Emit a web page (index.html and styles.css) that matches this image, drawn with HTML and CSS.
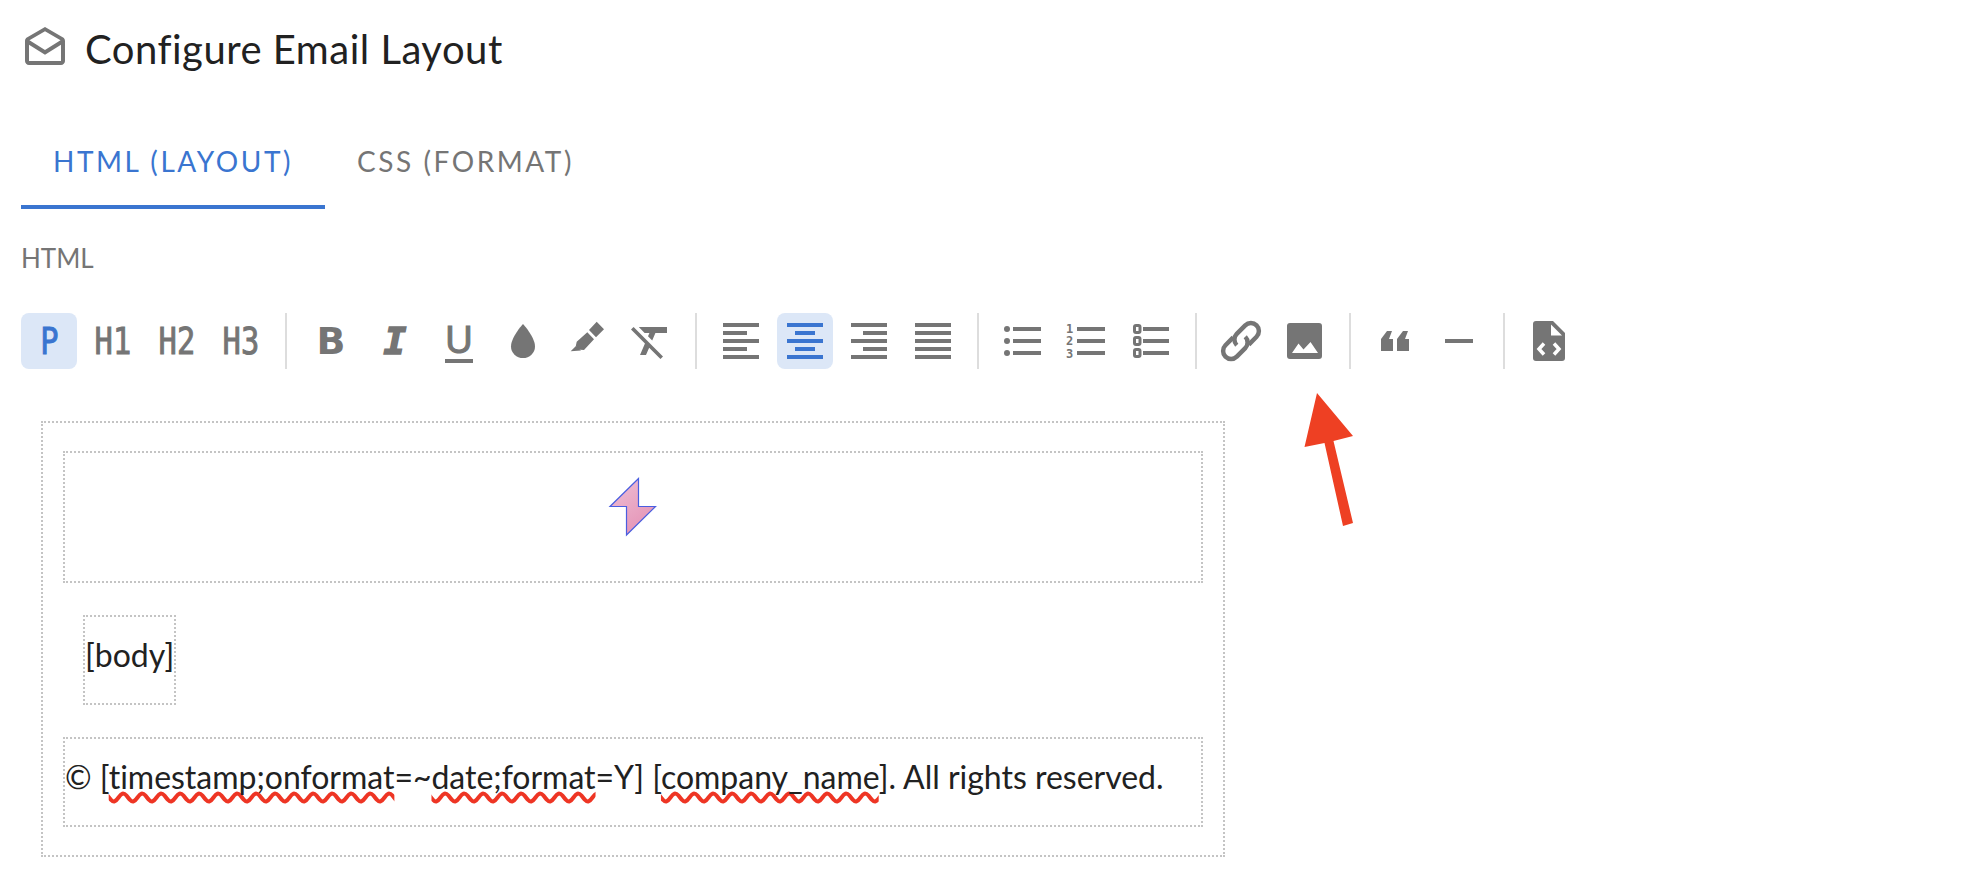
FILE: index.html
```html
<!DOCTYPE html>
<html lang="en">
<head>
  <meta charset="UTF-8">
  <meta name="viewport" content="width=device-width, initial-scale=1.0">
  <title>Configure Email Layout</title>
  <link rel="stylesheet" href="styles.css">
</head>
<body>
  <div class="page">
    <div class="page-head">
      <svg class="head-icon" viewBox="0 0 24 24"><path d="M21.99 8c0-.72-.37-1.35-.94-1.7L12 1 2.95 6.3C2.38 6.65 2 7.28 2 8v10c0 1.1.9 2 2 2h16c1.1 0 2-.9 2-2l-.01-10zM20 18H4V9.83l8 5 7.99-5L20 18zM12 12.5 4.24 7.65 12 3.1l7.76 4.55L12 12.5z"/></svg>
      <h1>Configure Email Layout</h1>
    </div>

    <div class="tabs">
      <div class="tab active">HTML (LAYOUT)</div>
      <div class="tab">CSS (FORMAT)</div>
    </div>

    <div class="field-label">HTML</div>

    <div class="toolbar">
      <button class="tool active"><span class="tag">P</span></button>
      <button class="tool"><span class="tag">H1</span></button>
      <button class="tool"><span class="tag">H2</span></button>
      <button class="tool"><span class="tag">H3</span></button>
      <div class="sep"></div>
      <button class="tool"><span class="fmt fmt-b">B</span></button>
      <button class="tool"><span class="fmt fmt-i">I</span></button>
      <button class="tool"><span class="fmt fmt-u">U</span></button>
      <button class="tool">
        <svg viewBox="0 0 56 56"><path d="M28 11C28 11 16 24 16 33.500a12 11.500 0 0 0 24 0C40 24 28 11 28 11z"/></svg>
      </button>
      <button class="tool">
        <svg viewBox="0 0 56 56"><path d="M37.700 8.700 45 16.300 37 24.300 30 17zM28.300 19.300 35 26.300 25 37 18 36.500 17 33 11.700 38.300 16.800 33 17.700 28.700z"/><path d="M11.700 38.300 17 33 22 37.500z"/></svg>
      </button>
      <button class="tool">
        <svg viewBox="0 0 56 56"><g transform="translate(4 4) scale(2)"><path d="M3.270 5 2 6.270l6.970 6.970L6.500 19h3l1.570-3.660L16.730 21 18 19.730 3.550 5.270 3.270 5zM6 5v.180L8.820 8h2.400l-.720 1.680 2.100 2.100L14.210 8H20V5H6z"/></g></svg>
      </button>
      <div class="sep"></div>
      <button class="tool">
        <svg viewBox="0 0 56 56"><path d="M10 10h36v4H10zM10 18h24v4H10zM10 26h36v4H10zM10 34h24v4H10zM10 42h36v4H10z"/></svg>
      </button>
      <button class="tool active">
        <svg viewBox="0 0 56 56"><path d="M10 10h36v4H10zM18 18h20v4H18zM10 26h36v4H10zM18 34h20v4H18zM10 42h36v4H10z"/></svg>
      </button>
      <button class="tool">
        <svg viewBox="0 0 56 56"><path d="M10 10h36v4H10zM22 18h24v4H22zM10 26h36v4H10zM22 34h24v4H22zM10 42h36v4H10z"/></svg>
      </button>
      <button class="tool">
        <svg viewBox="0 0 56 56"><path d="M10 10h36v4H10zM10 18h36v4H10zM10 26h36v4H10zM10 34h36v4H10zM10 42h36v4H10z"/></svg>
      </button>
      <div class="sep"></div>
      <button class="tool">
        <svg viewBox="0 0 56 56"><circle cx="12" cy="16" r="3"/><circle cx="12" cy="28" r="3"/><circle cx="12" cy="40" r="3"/><path d="M18 14h28v4H18zM18 26h28v4H18zM18 38h28v4H18z"/></svg>
      </button>
      <button class="tool">
        <svg viewBox="0 0 56 56"><text class="list-num" x="7" y="20">1</text><text class="list-num" x="7" y="32">2</text><text class="list-num" x="7" y="45">3</text><path d="M18 14h28v4H18zM18 26h28v4H18zM18 38h28v4H18z"/></svg>
      </button>
      <button class="tool">
        <svg viewBox="0 0 56 56"><path d="M20 14h26v4H20zM20 26h26v4H20zM20 38h26v4H20z"/><g class="outline"><rect x="11.500" y="12.500" width="5.500" height="7" rx="1.500"/><rect x="11.500" y="24.500" width="5.500" height="7" rx="1.500"/><rect x="11.500" y="36.500" width="5.500" height="7" rx="1.500"/></g></svg>
      </button>
      <div class="sep"></div>
      <button class="tool">
        <svg viewBox="0 0 56 56"><g class="outline link-icon" transform="rotate(-45 28 28)"><path d="M25 20H14a8 8 0 0 0 0 16H26a8 8 0 0 0 8-8"/><path d="M31 36H42a8 8 0 0 0 0-16H30a8 8 0 0 0-8 8"/></g></svg>
      </button>
      <button class="tool">
        <svg viewBox="0 0 56 56"><path fill-rule="evenodd" d="M13 10h29a3 3 0 0 1 3 3v30a3 3 0 0 1-3 3H13a3 3 0 0 1-3-3V13a3 3 0 0 1 3-3zM15 40h26l-7.500-11-7 7.500-5-6z"/></svg>
      </button>
      <div class="sep"></div>
      <button class="tool">
        <svg viewBox="0 0 56 56"><path d="M14 38V26l6-8h5l-3 8h4v12zM30 38V26l6-8h5l-3 8h4v12z"/></svg>
      </button>
      <button class="tool">
        <svg viewBox="0 0 56 56"><path d="M14 26h28v4H14z"/></svg>
      </button>
      <div class="sep"></div>
      <button class="tool">
        <svg viewBox="0 0 56 56"><path d="M15 8h17l12 12v25a3 3 0 0 1-3 3H15a3 3 0 0 1-3-3V11a3 3 0 0 1 3-3z"/><path class="white" d="M30 11.500 41 22.500H30z"/><path class="code-mark" d="M23 30.500 18 36l5 5.500M33 30.500 38 36l-5 5.500"/></svg>
      </button>
    </div>

    <div class="email-box">
      <div class="email-head">
        <svg class="logo" width="50" height="60" viewBox="0 0 50 60">
          <defs>
            <linearGradient id="boltFill" x1="0" y1="0" x2="0.6" y2="1">
              <stop offset="0" stop-color="#eec0d6"/>
              <stop offset="1" stop-color="#e594b6"/>
            </linearGradient>
          </defs>
          <path d="M30.500 1.500 2 29.500H18.500V58L47.500 29.500H30.500z" fill="url(#boltFill)" stroke="#4a5ee0" stroke-width="1.200"/>
        </svg>
      </div>
      <div class="email-body">[body]</div>
      <div class="email-foot">© [<span class="spell">timestamp;onformat</span>=~<span class="spell">date;format</span>=Y] [<span class="spell">company_name</span>]. All rights reserved.</div>
    </div>

    <svg class="arrow" width="60" height="140" viewBox="0 0 60 140"><path d="M17 3 53 46 33.500 51 53 133 43 136 24.500 53 4.500 57z"/></svg>
  </div>
</body>
</html>
```

FILE: styles.css
```css
* {
  box-sizing: border-box;
}

body {
  margin: 0;
  background: #fff;
  color: #212121;
  font-family: Lato, "Open Sans", sans-serif;
}

.page {
  position: relative;
  height: 886px;
  padding: 25px 0 0 21px;
  overflow: hidden;
}

.page-head {
  display: flex;
  align-items: center;
  gap: 16px;
}

.head-icon {
  width: 48px;
  height: 48px;
  fill: #757575;
}

h1 {
  margin: 0;
  font-size: 40px;
  font-weight: 400;
  line-height: 48px;
  letter-spacing: 0.500px;
}

.tabs {
  display: flex;
  margin-top: 40px;
}

.tab {
  height: 96px;
  padding: 4px 32px 0;
  display: flex;
  align-items: center;
  border-bottom: 4px solid transparent;
  color: #757575;
  font-size: 28px;
  letter-spacing: 2.550px;
}

.tab.active {
  border-bottom-color: #3a75d0;
  color: #3a75d0;
}

.field-label {
  margin-top: 33px;
  color: #757575;
  font-size: 26px;
  line-height: 32px;
}

.toolbar {
  display: flex;
  gap: 8px;
  margin-top: 39px;
}

.tool {
  width: 56px;
  height: 56px;
  padding: 0;
  display: flex;
  align-items: center;
  justify-content: center;
  background: none;
  border: none;
  border-radius: 8px;
  color: #757575;
  overflow: hidden;
}

.tool.active {
  background: #dce7f7;
  color: #3a75d0;
}

.tool svg {
  width: 56px;
  height: 56px;
  fill: currentColor;
}

.sep {
  width: 2px;
  height: 56px;
  margin: 0 8px;
  background: #ddd;
}

.tag {
  display: inline-block;
  font: 38px/56px "DejaVu Sans Mono", monospace;
  -webkit-text-stroke: 1px currentColor;
  transform: scaleX(0.8);
}

.fmt {
  display: inline-block;
  line-height: 1;
}

.fmt-b {
  font: bold 38px/56px "DejaVu Sans", sans-serif;
}

.fmt-i {
  font: italic bold 38px/56px "DejaVu Sans Mono", monospace;
  -webkit-text-stroke: 1.500px currentColor;
}

.fmt-u {
  width: 28px;
  margin-top: 2px;
  border-bottom: 4px solid #757575;
  font: 38px/37px "Liberation Sans", sans-serif;
  -webkit-text-stroke: 1px currentColor;
  text-align: center;
}

.list-num {
  font: bold 12px "DejaVu Sans Mono", monospace;
}

.outline {
  fill: none;
  stroke: currentColor;
  stroke-width: 3px;
}

.link-icon {
  stroke-width: 4.500px;
}

.tool svg .white {
  fill: #fff;
}

.tool svg .code-mark {
  fill: none;
  stroke: #fff;
  stroke-width: 3.500px;
}

.email-box {
  width: 1184px;
  height: 436px;
  margin: 52px 0 0 20px;
  padding: 28px 20px 0 20px;
  border: 2px dotted #c4c4c4;
}

.email-head {
  height: 132px;
  padding-top: 24px;
  display: flex;
  justify-content: center;
  align-items: flex-start;
  border: 2px dotted #c4c4c4;
}

.email-body {
  width: 93px;
  height: 90px;
  margin: 32px 0 0 20px;
  padding-top: 18px;
  border: 2px dotted #c4c4c4;
  font-size: 32px;
  line-height: 40px;
  white-space: nowrap;
}

.email-foot {
  height: 90px;
  margin-top: 32px;
  padding-top: 18px;
  border: 2px dotted #c4c4c4;
  font-size: 32px;
  line-height: 40px;
  letter-spacing: -0.015px;
  white-space: nowrap;
}

.spell {
  text-decoration: underline wavy #ee3524 4px;
  text-decoration-skip-ink: none;
  text-underline-offset: 3px;
}

.arrow {
  position: absolute;
  left: 1300px;
  top: 390px;
  fill: #ee4023;
}
```
